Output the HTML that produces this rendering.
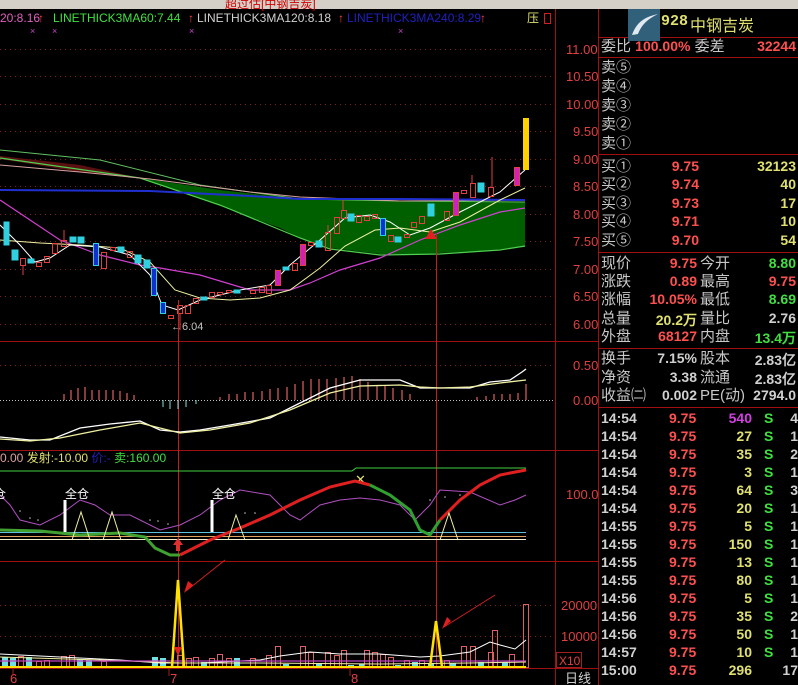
<!DOCTYPE html>
<html><head><meta charset="utf-8"><style>
*{margin:0;padding:0}
body{width:798px;height:685px;background:#000;overflow:hidden;position:relative;font-family:"Liberation Sans","Noto Sans CJK SC",sans-serif}
svg{position:absolute;left:0;top:0}
.rp{position:absolute;left:599px;top:0;width:199px;height:685px}
.r{position:absolute;left:2px;height:19px;line-height:19px;font-size:15px;color:#c8c8c8;white-space:nowrap}
.v{position:absolute;text-align:right;font-weight:bold;font-size:14px;font-family:"Liberation Sans",sans-serif}
.red{color:#ff5050}.yel{color:#e0e070}.grn{color:#40e040}.wht{color:#d0d0d0}.mag{color:#d040e0}
.t{position:absolute;left:2px;height:18px;line-height:18px;font-size:14px;font-weight:bold;font-family:"Liberation Sans",sans-serif;width:197px}
</style></head><body>
<svg width="599" height="685" xmlns="http://www.w3.org/2000/svg" font-family="Liberation Sans, Noto Sans CJK SC, sans-serif">
<rect x="0" y="0" width="599" height="9" fill="#d4d0c8"/>
<text x="225" y="8" font-size="12" fill="#d00000">超过估[中钢吉炭]</text>
<g stroke="#a01010" stroke-width="1" fill="none">
<line x1="555.5" y1="9" x2="555.5" y2="685"/>
<line x1="598.5" y1="9" x2="598.5" y2="685"/>
<line x1="0" y1="341.5" x2="598" y2="341.5"/>
<line x1="0" y1="450.5" x2="598" y2="450.5"/>
<line x1="0" y1="561.5" x2="598" y2="561.5"/>
<line x1="0" y1="668.5" x2="598" y2="668.5"/>
</g>
<g stroke="#802020" stroke-dasharray="1,4" stroke-width="1">
<line x1="0" y1="49.5" x2="555" y2="49.5"/><line x1="0" y1="76.5" x2="555" y2="76.5"/><line x1="0" y1="104.5" x2="555" y2="104.5"/><line x1="0" y1="131.5" x2="555" y2="131.5"/><line x1="0" y1="159.5" x2="555" y2="159.5"/><line x1="0" y1="186.5" x2="555" y2="186.5"/><line x1="0" y1="214.5" x2="555" y2="214.5"/><line x1="0" y1="241.5" x2="555" y2="241.5"/><line x1="0" y1="269.5" x2="555" y2="269.5"/><line x1="0" y1="296.5" x2="555" y2="296.5"/><line x1="0" y1="324.5" x2="555" y2="324.5"/>
<line x1="0" y1="365.5" x2="555" y2="365.5"/><line x1="0" y1="605.5" x2="555" y2="605.5"/><line x1="0" y1="636.5" x2="555" y2="636.5"/>
</g>
<line x1="0" y1="400.5" x2="555" y2="400.5" stroke="#c0c0c0" stroke-dasharray="1,2"/>
<!-- price axis -->
<g font-size="13" fill="#e04040">
<text x="566" y="54">11.00</text><text x="566" y="81">10.50</text><text x="566" y="109">10.00</text><text x="573" y="136">9.50</text><text x="573" y="164">9.00</text><text x="573" y="191">8.50</text><text x="573" y="219">8.00</text><text x="573" y="246">7.50</text><text x="573" y="274">7.00</text><text x="573" y="301">6.50</text><text x="573" y="329">6.00</text>
<text x="573" y="370">0.50</text><text x="573" y="405">0.00</text><text x="566" y="499">100.0</text>
<text x="561" y="610">20000</text><text x="561" y="641">10000</text>
</g>
<rect x="556.5" y="652.5" width="25" height="15" fill="none" stroke="#a02020"/>
<text x="559" y="665" font-size="12" fill="#e04040">X10</text>
<text x="565" y="683" font-size="13" fill="#d0d0d0">日线</text>
<g font-size="13" fill="#e04040"><text x="10" y="683">6</text><text x="170" y="683">7</text><text x="351" y="683">8</text></g>
<g stroke="#a02020"><line x1="13" y1="669" x2="13" y2="676"/><line x1="169" y1="669" x2="169" y2="676"/><line x1="350" y1="669" x2="350" y2="676"/></g>
<!-- header text -->
<g font-size="12">
<text x="0" y="22" fill="#e060c0">20:8.16</text><text x="53" y="22" fill="#40e040">LINETHICK3MA60:7.44</text><text x="197" y="22" fill="#d0d0d0">LINETHICK3MA120:8.18</text><text x="347" y="22" fill="#2020c0">LINETHICK3MA240:8.29</text>
<text x="38" y="22" fill="#ff4040">↑</text><text x="188" y="22" fill="#ff4040">↑</text><text x="338" y="22" fill="#ff4040">↑</text><text x="480" y="22" fill="#ff4040">↑</text>
<text x="527" y="22" fill="#e0e070">压</text>
<text x="30" y="34" fill="#d040d0" font-size="9">×</text><text x="52" y="34" fill="#d040d0" font-size="9">×</text><text x="189" y="34" fill="#d040d0" font-size="9">×</text><text x="398" y="34" fill="#d040d0" font-size="9">×</text>
</g>
<rect x="544.5" y="13.5" width="6" height="10" fill="none" stroke="#d02020"/>
<!-- green cloud -->
<polygon points="0,156 60,168 140,178 220,190 300,199 400,201 525,202 525,247 480,251 420,254 380,254 330,248 300,238 280,228 220,206 140,178 0,159" fill="#006000"/>
<polygon points="0,156 80,165 140,178 80,172 0,159" fill="#5a1010"/>
<polyline points="0,158 140,178 220,205 300,238 330,249 380,255 440,254 500,250 525,246" fill="none" stroke="#50d050" stroke-width="1.2"/>
<polyline points="0,150 100,160 200,185 300,199 400,201 525,202" fill="none" stroke="#60c060" stroke-width="1"/>
<polyline points="0,165 80,172 150,179 250,192 300,197 400,201 525,200" fill="none" stroke="#d8a0a0" stroke-width="1"/>
<polyline points="0,190 150,191 250,196 300,199 400,199 525,200" fill="none" stroke="#2030d0" stroke-width="2"/>
<!-- MAs -->
<polyline points="0,200 30,220 60,240 100,255 140,265 160,268 200,275 250,290 290,290 310,283 340,270 380,258 420,240 460,225 500,212 525,208" fill="none" stroke="#d040d0" stroke-width="1.2"/>
<polyline points="0,240 40,243 80,245 120,248 150,262 175,290 200,298 230,300 260,298 290,290 320,268 345,246 375,230 400,228 430,232 460,222 500,200 525,188" fill="none" stroke="#f0f0a0" stroke-width="1"/>
<polyline points="0,225 20,245 35,262 50,258 70,245 100,247 130,255 150,275 162,305 178,310 200,300 240,290 270,285 290,265 320,240 345,218 370,215 390,222 410,235 430,228 460,212 500,192 525,170" fill="none" stroke="#ffffff" stroke-width="1"/>
<!-- candles -->
<g stroke-width="1">
<g fill="#30d0e0" stroke="#30d0e0"><rect x="4" y="222" width="5" height="23"/><rect x="12" y="250" width="6" height="10"/><rect x="28" y="259" width="6" height="4"/><rect x="70" y="237" width="6" height="5"/><rect x="78" y="237" width="6" height="6"/><rect x="118" y="247" width="6" height="5"/><rect x="135" y="255" width="6" height="8"/><rect x="144" y="260" width="6" height="8"/><rect x="201" y="297" width="6" height="3"/><rect x="234" y="290" width="6" height="3"/><rect x="283" y="267" width="6" height="3"/><rect x="316" y="241" width="6" height="6"/><rect x="348" y="214" width="6" height="7"/><rect x="395" y="237" width="6" height="5"/><rect x="428" y="204" width="6" height="12"/><rect x="478" y="183" width="6" height="9"/></g>
<g fill="#1030d0" stroke="#30d0e0"><rect x="93.5" y="243.5" width="5" height="22"/><rect x="151.5" y="268.5" width="5" height="27"/><rect x="160.5" y="302.5" width="5" height="11"/><rect x="380.5" y="218.5" width="5" height="17"/></g>
<g fill="none" stroke="#e04040"><rect x="20.5" y="258.5" width="5" height="7"/><rect x="36.5" y="262.5" width="5" height="4"/><rect x="44.5" y="256.5" width="5" height="6"/><rect x="52.5" y="243.5" width="5" height="10"/><rect x="61.5" y="240.5" width="5" height="6"/><rect x="101.5" y="252.5" width="5" height="16"/><rect x="110.5" y="247.5" width="5" height="3"/><rect x="127.5" y="251.5" width="5" height="6"/><rect x="168.5" y="315.5" width="5" height="3"/><rect x="177.5" y="305.5" width="5" height="8"/><rect x="185.5" y="305.5" width="5" height="8"/><rect x="193.5" y="298.5" width="5" height="5"/><rect x="209.5" y="292.5" width="5" height="5"/><rect x="217.5" y="292.5" width="5" height="2"/><rect x="226.5" y="290.5" width="5" height="2"/><rect x="250.5" y="290.5" width="5" height="3"/><rect x="259.5" y="287.5" width="5" height="5"/><rect x="266.5" y="285.5" width="5" height="8"/><rect x="292.5" y="263.5" width="5" height="7"/><rect x="308.5" y="242.5" width="5" height="3"/><rect x="325.5" y="232.5" width="5" height="18"/><rect x="334.5" y="217.5" width="5" height="16"/><rect x="341.5" y="210.5" width="5" height="8"/><rect x="356.5" y="215.5" width="5" height="7"/><rect x="364.5" y="216.5" width="5" height="4"/><rect x="372.5" y="214.5" width="5" height="4"/><rect x="388.5" y="235.5" width="5" height="6"/><rect x="404.5" y="234.5" width="5" height="3"/><rect x="411.5" y="222.5" width="5" height="5"/><rect x="419.5" y="216.5" width="5" height="7"/><rect x="444.5" y="211.5" width="5" height="9"/><rect x="461.5" y="190.5" width="5" height="3"/><rect x="470.5" y="183.5" width="5" height="14"/><rect x="488.5" y="187.5" width="5" height="9"/></g>
<g fill="#d020c0" stroke="#e04040"><rect x="275.5" y="270.5" width="5" height="15"/><rect x="300.5" y="244.5" width="5" height="21"/><rect x="453.5" y="192.5" width="5" height="23"/><rect x="514.5" y="167.5" width="5" height="18"/></g>
<g stroke="#e04040"><line x1="180" y1="313" x2="180" y2="330"/><line x1="64" y1="230" x2="64" y2="240"/><line x1="23" y1="266" x2="23" y2="275"/><line x1="492" y1="157" x2="492" y2="187"/><line x1="343" y1="200" x2="343" y2="210"/><line x1="328" y1="225" x2="328" y2="232"/><line x1="472" y1="175" x2="472" y2="183"/></g>
<rect x="523" y="118" width="6" height="52" fill="#ffd000"/>
<polygon points="431,229 425,239 437,239" fill="#e02020"/>
</g>
<text x="171" y="330" font-size="11" fill="#c0c0c0">←6.04</text>
<!-- red crosshair lines -->
<line x1="178.5" y1="300" x2="178.5" y2="668" stroke="#c02020"/>
<line x1="436.5" y1="233" x2="436.5" y2="668" stroke="#c02020"/>
<!-- MACD pane -->
<g stroke="#e06060" stroke-width="1.2">
<line x1="64" y1="400" x2="64" y2="394"/><line x1="71" y1="400" x2="71" y2="390"/><line x1="78" y1="400" x2="78" y2="388"/><line x1="85" y1="400" x2="85" y2="387"/><line x1="92" y1="400" x2="92" y2="390"/><line x1="99" y1="400" x2="99" y2="390"/><line x1="106" y1="400" x2="106" y2="390"/><line x1="113" y1="400" x2="113" y2="390"/><line x1="120" y1="400" x2="120" y2="391"/><line x1="127" y1="400" x2="127" y2="393"/><line x1="134" y1="400" x2="134" y2="395"/>
<line x1="220" y1="400" x2="220" y2="397"/><line x1="229" y1="400" x2="229" y2="394"/><line x1="237" y1="400" x2="237" y2="394"/><line x1="245" y1="400" x2="245" y2="392"/><line x1="253" y1="400" x2="253" y2="392"/><line x1="262" y1="400" x2="262" y2="391"/><line x1="270" y1="400" x2="270" y2="389"/><line x1="278" y1="400" x2="278" y2="388"/><line x1="287" y1="400" x2="287" y2="387"/><line x1="295" y1="400" x2="295" y2="384"/><line x1="303" y1="400" x2="303" y2="381"/><line x1="311" y1="400" x2="311" y2="379"/><line x1="319" y1="400" x2="319" y2="379"/><line x1="327" y1="400" x2="327" y2="379"/><line x1="336" y1="400" x2="336" y2="378"/><line x1="344" y1="400" x2="344" y2="377"/><line x1="352" y1="400" x2="352" y2="376"/><line x1="360" y1="400" x2="360" y2="379"/><line x1="368" y1="400" x2="368" y2="382"/><line x1="377" y1="400" x2="377" y2="385"/><line x1="385" y1="400" x2="385" y2="386"/><line x1="393" y1="400" x2="393" y2="388"/><line x1="402" y1="400" x2="402" y2="390"/><line x1="410" y1="400" x2="410" y2="394"/>
<line x1="477" y1="400" x2="477" y2="397"/><line x1="486" y1="400" x2="486" y2="396"/><line x1="494" y1="400" x2="494" y2="394"/><line x1="502" y1="400" x2="502" y2="394"/><line x1="510" y1="400" x2="510" y2="394"/><line x1="518" y1="400" x2="518" y2="393"/><line x1="526" y1="400" x2="526" y2="384"/>
</g>
<g stroke="#80e0e0"><line x1="163" y1="400" x2="163" y2="407"/><line x1="170" y1="400" x2="170" y2="409"/><line x1="178" y1="400" x2="178" y2="409"/><line x1="186" y1="400" x2="186" y2="407"/><line x1="196" y1="400" x2="196" y2="404"/></g>
<polyline points="0,437 30,440 50,440 80,428 110,424 140,421 160,430 180,432 200,430 230,425 270,418 300,403 330,388 360,380 400,380 420,388 440,388 470,388 490,382 510,380 522,372 526,369" fill="none" stroke="#ffffff" stroke-width="1.3"/>
<polyline points="0,439 30,441 60,438 100,430 140,423 180,433 210,430 250,423 290,410 330,393 360,386 400,385 420,387 440,388 470,387 500,383 526,380" fill="none" stroke="#f0f0a0" stroke-width="1.3"/>
<!-- Pane 3 -->
<text x="0" y="462" font-size="12"><tspan fill="#e0a0a0">0.00 </tspan><tspan fill="#e0e070">发射:-10.00 </tspan><tspan fill="#2020c0">价:- </tspan><tspan fill="#40e040">卖:160.00</tspan></text>
<polyline points="0,471 352,471 356,468 526,468" fill="none" stroke="#40d040" stroke-width="1"/>
<text x="355" y="484" font-size="13" fill="#e0e070">✕</text>
<line x1="0" y1="532.5" x2="526" y2="532.5" stroke="#60c0e0"/>
<line x1="0" y1="536.5" x2="526" y2="536.5" stroke="#e0a060"/>
<line x1="0" y1="539.5" x2="526" y2="539.5" stroke="#f0f0d0"/>
<g fill="#c0c0c0"><circle cx="20" cy="511" r=".8"/><circle cx="30" cy="518" r=".8"/><circle cx="38" cy="520" r=".8"/><circle cx="245" cy="513" r=".8"/><circle cx="255" cy="513" r=".8"/><circle cx="150" cy="520" r=".8"/><circle cx="158" cy="521" r=".8"/><circle cx="168" cy="524" r=".8"/><circle cx="430" cy="500" r=".8"/><circle cx="445" cy="497" r=".8"/><circle cx="460" cy="495" r=".8"/></g>
<polyline points="0,495 10,505 20,520 40,525 60,515 80,500 95,505 110,515 130,515 160,530 180,525 200,515 220,500 240,490 270,495 290,515 300,520 320,505 340,500 360,498 380,500 400,505 415,520 430,505 440,490 470,492 500,505 515,500 526,495" fill="none" stroke="#b050c0" stroke-width="1"/>
<polyline points="0,530 40,531 80,535 120,533 145,537 155,548 170,555 180,555" fill="none" stroke="#40a030" stroke-width="3"/>
<polyline points="180,555 210,540 240,528 270,515 300,500 330,487 355,481 370,485" fill="none" stroke="#e02020" stroke-width="3"/>
<polyline points="370,485 390,495 410,510 420,530 430,535 440,520" fill="none" stroke="#30a030" stroke-width="3"/>
<polyline points="440,520 460,500 480,485 500,475 526,470" fill="none" stroke="#e02020" stroke-width="3"/>
<g fill="none" stroke="#f0f0a0"><polyline points="72,540 81,512 90,540"/><polyline points="103,540 112,512 121,540"/><polyline points="228,540 236,515 245,540"/><polyline points="440,540 449,513 458,540"/></g>
<g stroke="#fff" stroke-width="3"><line x1="65" y1="500" x2="65" y2="532"/><line x1="212" y1="500" x2="212" y2="532"/></g>
<g font-size="12" fill="#fff"><text x="-6" y="498">仓</text><text x="65" y="498">全仓</text><text x="212" y="498">全仓</text></g>
<polygon points="178,538 173,545 176,545 176,551 180,551 180,545 183,545" fill="#e03030"/>
<!-- volume -->
<g fill="#70e0e0"><rect x="2" y="657" width="6" height="11"/><rect x="10" y="658" width="6" height="10"/><rect x="26" y="657" width="6" height="11"/><rect x="77" y="659" width="6" height="9"/><rect x="86" y="660" width="6" height="8"/><rect x="152" y="657" width="6" height="11"/><rect x="160" y="658" width="6" height="10"/><rect x="201" y="662" width="6" height="6"/><rect x="234" y="658" width="6" height="10"/><rect x="283" y="664" width="6" height="4"/><rect x="316" y="664" width="6" height="4"/><rect x="348" y="665" width="6" height="3"/><rect x="359" y="664" width="6" height="4"/><rect x="395" y="665" width="6" height="3"/><rect x="412" y="662" width="6" height="6"/><rect x="428" y="663" width="6" height="5"/><rect x="450" y="663" width="6" height="5"/><rect x="478" y="662" width="6" height="6"/><rect x="502" y="662" width="6" height="6"/></g>
<g fill="none" stroke="#e06060"><rect x="18.5" y="656.5" width="5" height="11"/><rect x="36.5" y="661.5" width="5" height="6"/><rect x="44.5" y="660.5" width="5" height="7"/><rect x="61.5" y="656.5" width="5" height="11"/><rect x="69.5" y="655.5" width="5" height="12"/><rect x="101.5" y="661.5" width="5" height="6"/><rect x="177.5" y="655.5" width="5" height="12"/><rect x="186.5" y="658.5" width="5" height="9"/><rect x="193.5" y="657.5" width="5" height="10"/><rect x="209.5" y="658.5" width="5" height="9"/><rect x="217.5" y="654.5" width="5" height="13"/><rect x="226.5" y="658.5" width="5" height="9"/><rect x="250.5" y="658.5" width="5" height="9"/><rect x="266.5" y="655.5" width="5" height="12"/><rect x="275.5" y="646.5" width="5" height="21"/><rect x="300.5" y="646.5" width="5" height="21"/><rect x="308.5" y="652.5" width="5" height="15"/><rect x="325.5" y="652.5" width="5" height="15"/><rect x="334.5" y="655.5" width="5" height="12"/><rect x="341.5" y="650.5" width="5" height="17"/><rect x="364.5" y="650.5" width="5" height="17"/><rect x="372.5" y="652.5" width="5" height="15"/><rect x="380.5" y="654.5" width="5" height="13"/><rect x="388.5" y="657.5" width="5" height="10"/><rect x="404.5" y="660.5" width="5" height="7"/><rect x="419.5" y="660.5" width="5" height="7"/><rect x="444.5" y="660.5" width="5" height="7"/><rect x="461.5" y="646.5" width="5" height="21"/><rect x="470.5" y="646.5" width="5" height="21"/><rect x="488.5" y="652.5" width="5" height="15"/><rect x="492.5" y="630.5" width="5" height="37"/><rect x="509.5" y="654.5" width="5" height="13"/><rect x="523.5" y="604.5" width="5" height="63"/></g>
<polyline points="0,654 60,657 120,660 160,663 200,663 260,660 280,656 310,652 340,654 380,654 420,657 440,656 470,652 490,642 500,645 515,649 526,640" fill="none" stroke="#ffffff" stroke-width="1"/>
<polyline points="0,657 100,660 180,663 260,663 380,664 470,663 526,662" fill="none" stroke="#f0f0a0"/>
<line x1="0" y1="661" x2="526" y2="661" stroke="#c040c0" stroke-width="1.2"/>
<line x1="0" y1="667" x2="526" y2="667" stroke="#ffe000" stroke-width="2"/>
<polyline points="172,667 178,580 184,667" fill="none" stroke="#ffe000" stroke-width="2.5"/>
<polyline points="430,667 436,621 442,667" fill="none" stroke="#ffe000" stroke-width="2.5"/>
<g stroke="#d02020"><line x1="225" y1="560" x2="186" y2="591"/><line x1="495" y1="595" x2="444" y2="627"/></g>
<polygon points="184,593 193,585 188,581" fill="#e02020"/><polygon points="442,629 451,621 447,617" fill="#e02020"/>
<polygon points="174,647 182,647 178,656" fill="#e02020"/>
</svg>
<div class="rp">
<div style="position:absolute;left:0;top:0;width:199px;height:9px;background:#d4d0c8"></div>
<div style="position:absolute;left:0;top:37px;width:199px;height:1px;background:#a01010"></div>
<div style="position:absolute;left:0;top:57px;width:199px;height:1px;background:#a01010"></div>
<div style="position:absolute;left:0;top:154px;width:199px;height:1px;background:#a01010"></div>
<div style="position:absolute;left:0;top:252px;width:199px;height:1px;background:#a01010"></div>
<div style="position:absolute;left:0;top:348px;width:199px;height:1px;background:#a01010"></div>
<div style="position:absolute;left:0;top:407px;width:199px;height:1px;background:#a01010"></div>
<div style="position:absolute;left:29px;top:9px;width:32px;height:32px;background:#30607a"></div>
<svg style="left:29px;top:9px" width="32" height="32"><path d="M4 26 C8 14 16 8 30 5 C20 10 14 15 10 25 Z" fill="#e0e8f0"/></svg>
<div style="position:absolute;left:62px;top:13px;font-size:15px;font-weight:bold;color:#e0e070;font-family:'Liberation Mono',monospace">928</div>
<div style="position:absolute;left:91px;top:12px;font-size:16px;color:#e0e070">中钢吉炭</div>
<div class="r" style="top:37px">委比 <span class="red" style="font-weight:bold;font-size:14px">100.00%</span> 委差</div>
<div class="v red" style="right:2px;top:38px">32244</div>
<div class="r" style="top:58px">卖⑤</div><div class="r" style="top:77px">卖④</div><div class="r" style="top:96px">卖③</div><div class="r" style="top:115px">卖②</div><div class="r" style="top:134px">卖①</div>
<div class="r" style="top:157px">买①</div><div class="v red" style="left:60px;width:40px;top:158px">9.75</div><div class="v yel" style="right:2px;top:158px">32123</div>
<div class="r" style="top:175px">买②</div><div class="v red" style="left:60px;width:40px;top:176px">9.74</div><div class="v yel" style="right:2px;top:176px">40</div>
<div class="r" style="top:194px">买③</div><div class="v red" style="left:60px;width:40px;top:195px">9.73</div><div class="v yel" style="right:2px;top:195px">17</div>
<div class="r" style="top:212px">买④</div><div class="v red" style="left:60px;width:40px;top:213px">9.71</div><div class="v yel" style="right:2px;top:213px">10</div>
<div class="r" style="top:231px">买⑤</div><div class="v red" style="left:60px;width:40px;top:232px">9.70</div><div class="v yel" style="right:2px;top:232px">54</div>
<div class="r" style="top:254px">现价</div><div class="v red" style="left:50px;width:48px;top:255px">9.75</div><div class="r" style="left:101px;top:254px">今开</div><div class="v grn" style="right:2px;top:255px">8.80</div>
<div class="r" style="top:272px">涨跌</div><div class="v red" style="left:50px;width:48px;top:273px">0.89</div><div class="r" style="left:101px;top:272px">最高</div><div class="v red" style="right:2px;top:273px">9.75</div>
<div class="r" style="top:290px">涨幅</div><div class="v red" style="left:40px;width:58px;top:291px">10.05%</div><div class="r" style="left:101px;top:290px">最低</div><div class="v grn" style="right:2px;top:291px">8.69</div>
<div class="r" style="top:309px">总量</div><div class="v yel" style="left:40px;width:58px;top:310px">20.2万</div><div class="r" style="left:101px;top:309px">量比</div><div class="v wht" style="right:2px;top:310px">2.76</div>
<div class="r" style="top:327px">外盘</div><div class="v red" style="left:40px;width:58px;top:328px">68127</div><div class="r" style="left:101px;top:327px">内盘</div><div class="v grn" style="right:2px;top:328px">13.4万</div>
<div class="r" style="top:349px">换手</div><div class="v wht" style="left:40px;width:58px;top:350px">7.15%</div><div class="r" style="left:101px;top:349px">股本</div><div class="v wht" style="right:2px;top:350px">2.83亿</div>
<div class="r" style="top:368px">净资</div><div class="v wht" style="left:40px;width:58px;top:369px">3.38</div><div class="r" style="left:101px;top:368px">流通</div><div class="v wht" style="right:2px;top:369px">2.83亿</div>
<div class="r" style="top:386px">收益㈡</div><div class="v wht" style="left:40px;width:58px;top:387px">0.002</div><div class="r" style="left:101px;top:386px">PE(动)</div><div class="v wht" style="right:2px;top:387px">2794.0</div>
<div class="t" style="top:409px"><span class="wht">14:54</span><span class="red" style="position:absolute;left:68px">9.75</span><span class="mag" style="position:absolute;right:46px">540</span><span class="grn" style="position:absolute;left:163px">S</span><span class="wht" style="position:absolute;right:0">4</span></div>
<div class="t" style="top:427px"><span class="wht">14:54</span><span class="red" style="position:absolute;left:68px">9.75</span><span class="yel" style="position:absolute;right:46px">27</span><span class="grn" style="position:absolute;left:163px">S</span><span class="wht" style="position:absolute;right:0">1</span></div>
<div class="t" style="top:445px"><span class="wht">14:54</span><span class="red" style="position:absolute;left:68px">9.75</span><span class="yel" style="position:absolute;right:46px">35</span><span class="grn" style="position:absolute;left:163px">S</span><span class="wht" style="position:absolute;right:0">2</span></div>
<div class="t" style="top:463px"><span class="wht">14:54</span><span class="red" style="position:absolute;left:68px">9.75</span><span class="yel" style="position:absolute;right:46px">3</span><span class="grn" style="position:absolute;left:163px">S</span><span class="wht" style="position:absolute;right:0">1</span></div>
<div class="t" style="top:481px"><span class="wht">14:54</span><span class="red" style="position:absolute;left:68px">9.75</span><span class="yel" style="position:absolute;right:46px">64</span><span class="grn" style="position:absolute;left:163px">S</span><span class="wht" style="position:absolute;right:0">3</span></div>
<div class="t" style="top:499px"><span class="wht">14:54</span><span class="red" style="position:absolute;left:68px">9.75</span><span class="yel" style="position:absolute;right:46px">20</span><span class="grn" style="position:absolute;left:163px">S</span><span class="wht" style="position:absolute;right:0">1</span></div>
<div class="t" style="top:517px"><span class="wht">14:55</span><span class="red" style="position:absolute;left:68px">9.75</span><span class="yel" style="position:absolute;right:46px">5</span><span class="grn" style="position:absolute;left:163px">S</span><span class="wht" style="position:absolute;right:0">1</span></div>
<div class="t" style="top:535px"><span class="wht">14:55</span><span class="red" style="position:absolute;left:68px">9.75</span><span class="yel" style="position:absolute;right:46px">150</span><span class="grn" style="position:absolute;left:163px">S</span><span class="wht" style="position:absolute;right:0">1</span></div>
<div class="t" style="top:553px"><span class="wht">14:55</span><span class="red" style="position:absolute;left:68px">9.75</span><span class="yel" style="position:absolute;right:46px">13</span><span class="grn" style="position:absolute;left:163px">S</span><span class="wht" style="position:absolute;right:0">1</span></div>
<div class="t" style="top:571px"><span class="wht">14:55</span><span class="red" style="position:absolute;left:68px">9.75</span><span class="yel" style="position:absolute;right:46px">80</span><span class="grn" style="position:absolute;left:163px">S</span><span class="wht" style="position:absolute;right:0">1</span></div>
<div class="t" style="top:589px"><span class="wht">14:56</span><span class="red" style="position:absolute;left:68px">9.75</span><span class="yel" style="position:absolute;right:46px">5</span><span class="grn" style="position:absolute;left:163px">S</span><span class="wht" style="position:absolute;right:0">1</span></div>
<div class="t" style="top:607px"><span class="wht">14:56</span><span class="red" style="position:absolute;left:68px">9.75</span><span class="yel" style="position:absolute;right:46px">35</span><span class="grn" style="position:absolute;left:163px">S</span><span class="wht" style="position:absolute;right:0">2</span></div>
<div class="t" style="top:625px"><span class="wht">14:56</span><span class="red" style="position:absolute;left:68px">9.75</span><span class="yel" style="position:absolute;right:46px">50</span><span class="grn" style="position:absolute;left:163px">S</span><span class="wht" style="position:absolute;right:0">1</span></div>
<div class="t" style="top:643px"><span class="wht">14:57</span><span class="red" style="position:absolute;left:68px">9.75</span><span class="yel" style="position:absolute;right:46px">10</span><span class="grn" style="position:absolute;left:163px">S</span><span class="wht" style="position:absolute;right:0">1</span></div>
<div class="t" style="top:661px"><span class="wht">15:00</span><span class="red" style="position:absolute;left:68px">9.75</span><span class="yel" style="position:absolute;right:46px">296</span><span class="wht" style="position:absolute;right:0">17</span></div>
</div>
</body></html>
